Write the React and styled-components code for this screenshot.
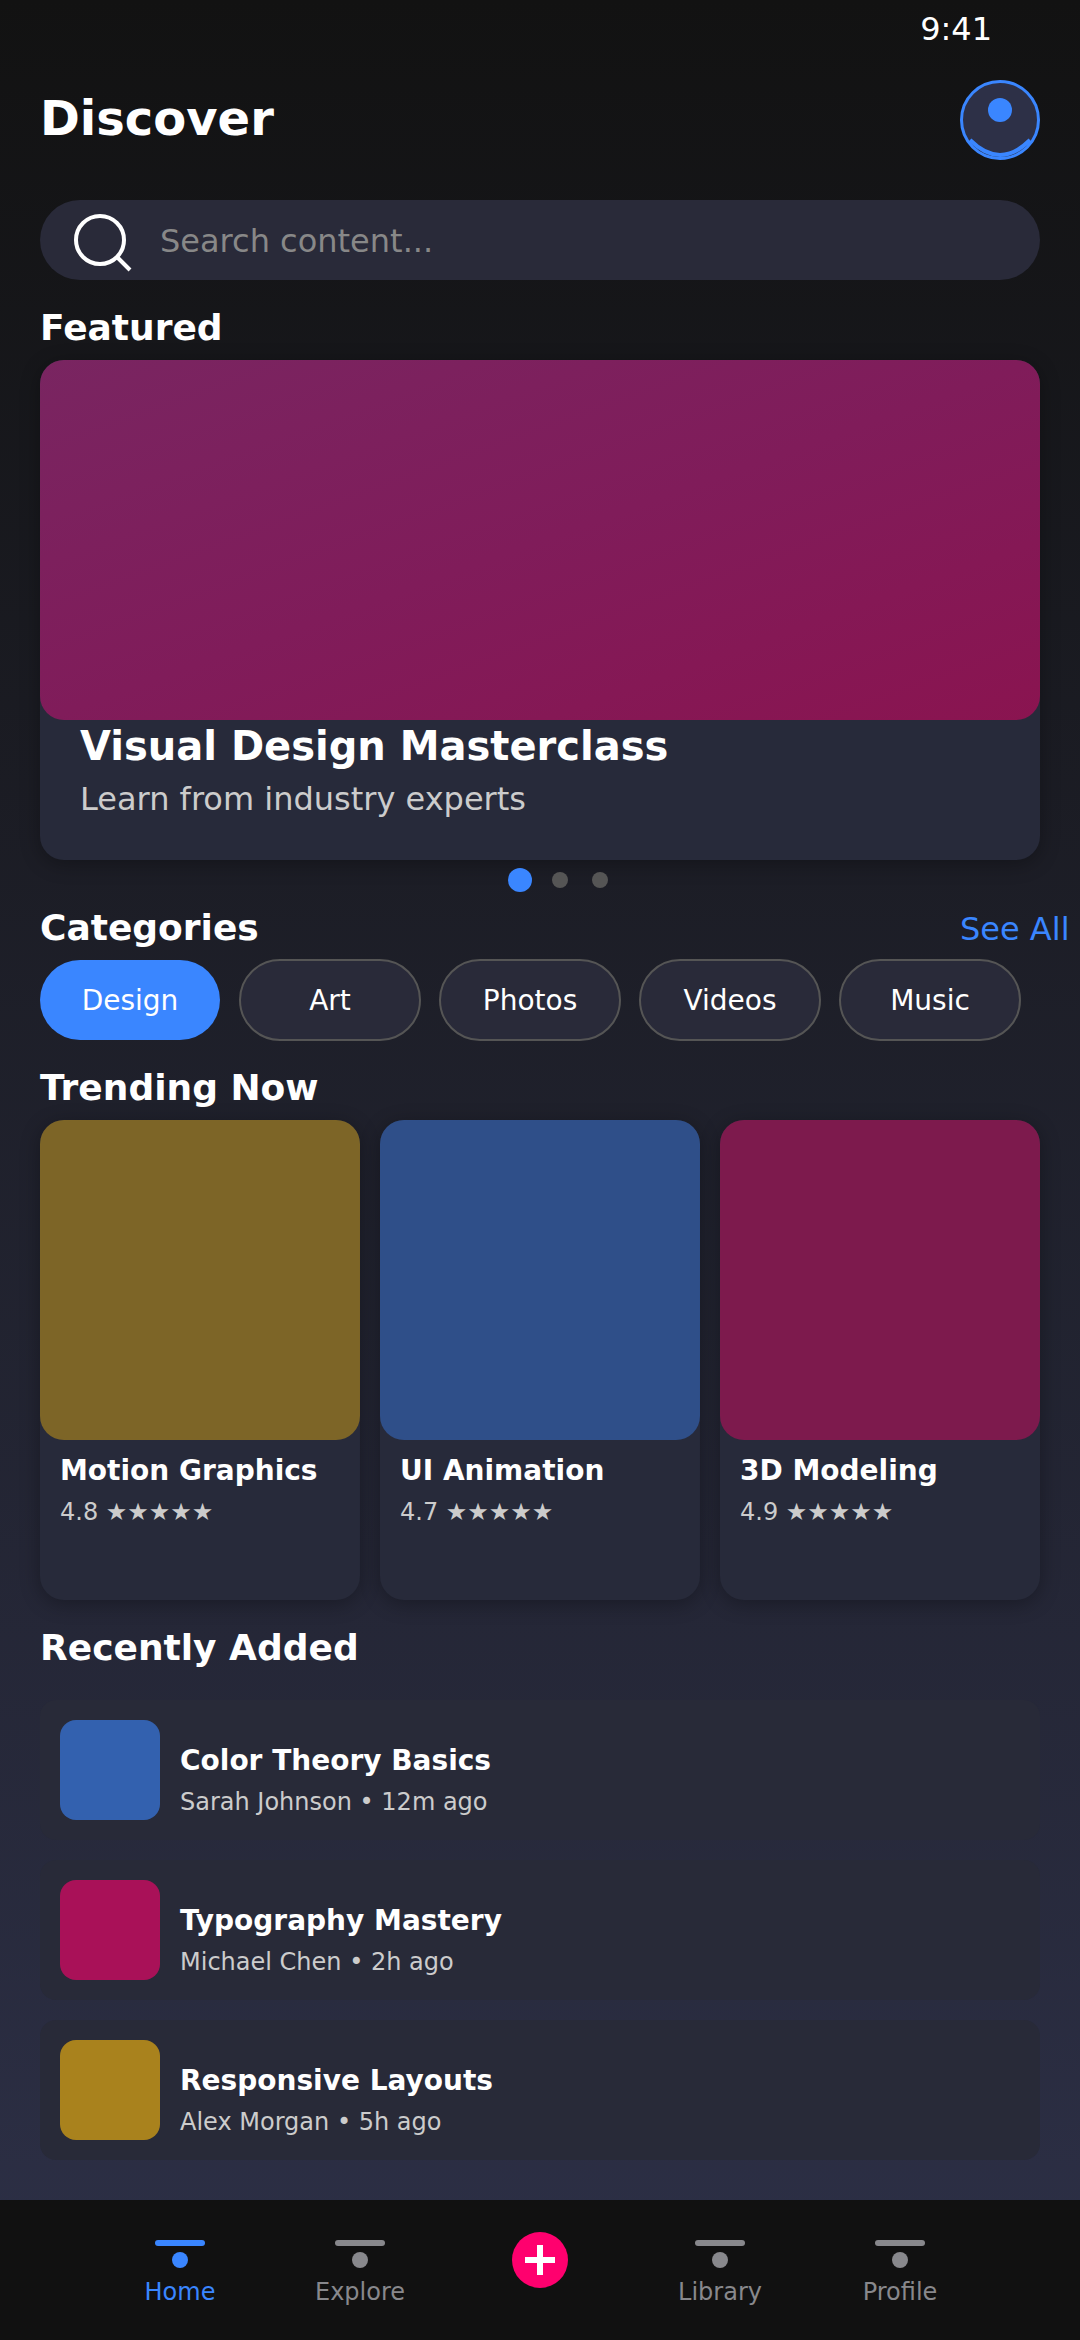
import React, { useState } from "react";
import styled, { createGlobalStyle } from "styled-components";

const color = {
  ink: "#121212",
  surface: "#292a39",
  card: "#272a3a",
  row: "#282a38",
  accent: "#3a86ff",
  pink: "#ff006e",
  text: "#ffffff",
  soft: "#cccccc",
  muted: "#88888c",
  outline: "#555555",
};

const GlobalStyle = createGlobalStyle`
  *, *::before, *::after { box-sizing: border-box; }
  body {
    margin: 0;
    background: ${color.ink};
    color: ${color.text};
    font-family: "DejaVu Sans", sans-serif;
  }
  button, input { font: inherit; color: inherit; border: 0; padding: 0; }
  h1, h2, h3, p, ul { margin: 0; padding: 0; }
  ul { list-style: none; }
`;

const Page = styled.div`
  min-height: 100vh;
  display: flex;
  flex-direction: column;
  background: linear-gradient(to bottom, #121212, #2d3047);
`;

const StatusBar = styled.div`
  height: 60px;
  padding-right: 88px;
  text-align: right;
  font-size: 32px;
  line-height: 58px;
`;

const Content = styled.main`
  flex: 1;
  padding: 20px 40px 40px;
`;

const Header = styled.header`
  display: flex;
  justify-content: space-between;
  align-items: flex-start;
  height: 80px;
`;

const PageTitle = styled.h1`
  font-size: 48px;
  line-height: 76px;
`;

const AvatarButton = styled.button`
  width: 80px;
  height: 80px;
  border-radius: 50%;
  background: none;
  svg { display: block; }
`;

const SearchBar = styled.label`
  display: flex;
  align-items: center;
  gap: 28px;
  height: 80px;
  margin-top: 40px;
  padding: 0 32px;
  border-radius: 40px;
  background: ${color.surface};
  svg { flex: none; }
`;

const SearchInput = styled.input`
  flex: 1;
  min-width: 0;
  height: 80px;
  padding-top: 2px;
  background: none;
  outline: none;
  font-size: 32px;
  &::placeholder { color: #888888; opacity: 1; }
`;

const SectionHead = styled.div`
  display: flex;
  justify-content: space-between;
  align-items: baseline;
  height: 60px;
  margin-top: ${(p) => (p.$tight ? "0" : "20px")};
`;

const SectionTitle = styled.h2`
  font-size: 36px;
  line-height: 56px;
`;

const SeeAll = styled.a`
  width: 80px;
  min-width: 0;
  white-space: nowrap;
  font-size: 32px;
  line-height: 32px;
  color: ${color.accent};
  text-decoration: none;
`;

const Card = styled.article`
  border-radius: 24px;
  background: ${color.card};
  box-shadow: 0 4px 20px rgba(0, 0, 0, 0.3);
`;

const FeaturedArt = styled.div`
  height: 360px;
  border-radius: 24px;
  background: linear-gradient(to bottom right, #792561, #801c5a 50%, #8a1450);
`;

const FeaturedBody = styled.div`
  padding: 0 40px 34px;
`;

const FeaturedTitle = styled.h3`
  font-size: 40px;
  line-height: 52px;
`;

const FeaturedText = styled.p`
  font-size: 32px;
  line-height: 54px;
  color: ${color.soft};
`;

const Pager = styled.div`
  display: flex;
  justify-content: center;
  height: 40px;
  padding-left: 40px;
`;

const PagerDot = styled.button`
  display: grid;
  place-items: center;
  width: 40px;
  height: 40px;
  background: none;
  &::before {
    content: "";
    width: ${(p) => (p.$active ? "24px" : "16px")};
    height: ${(p) => (p.$active ? "24px" : "16px")};
    border-radius: 50%;
    background: ${(p) => (p.$active ? color.accent : color.outline)};
  }
`;

const Chips = styled.div`
  display: flex;
  gap: 20px;
`;

const Chip = styled.button`
  flex: 0 1 180px;
  height: 80px;
  border-radius: 40px;
  font-size: 28px;
  background: ${(p) => (p.$active ? color.accent : color.surface)};
  outline: ${(p) => (p.$active ? "none" : `2px solid ${color.outline}`)};
  outline-offset: -1px;
`;

const TrendingGrid = styled.div`
  display: grid;
  grid-template-columns: repeat(3, 1fr);
  gap: 20px;
`;

const TrendingArt = styled.div`
  height: 320px;
  border-radius: 24px;
  background: ${(p) => p.$tint};
`;

const TrendingBody = styled.div`
  padding: 7px 20px 70px;
`;

const ItemTitle = styled.h3`
  font-size: 28px;
  line-height: 47px;
  white-space: nowrap;
`;

const ItemMeta = styled.p`
  font-size: 24px;
  line-height: 36px;
  color: ${color.soft};
`;

const RecentList = styled.ul`
  display: flex;
  flex-direction: column;
  gap: 20px;
  margin-top: 20px;
`;

const RecentRow = styled.li`
  display: flex;
  gap: 20px;
  padding: 20px;
  border-radius: 16px;
  background: ${color.row};
`;

const Thumb = styled.div`
  width: 100px;
  height: 100px;
  border-radius: 16px;
  background: ${(p) => p.$tint};
`;

const RecentText = styled.div`
  padding-top: 17px;
`;

const NavBar = styled.nav`
  display: grid;
  grid-template-columns: repeat(5, 1fr);
  height: 140px;
  padding: 0 90px;
  background: #111111;
`;

const NavItem = styled.button`
  display: flex;
  flex-direction: column;
  align-items: center;
  gap: 6px;
  padding-top: 40px;
  background: none;
  font-size: 24px;
  line-height: 36px;
  color: ${(p) => (p.$active ? color.accent : color.muted)};
`;

const AddButton = styled.button`
  justify-self: center;
  width: 56px;
  height: 56px;
  margin-top: 32px;
  border-radius: 50%;
  background: ${color.pink};
  svg { display: block; }
`;

const AvatarIcon = () => (
  <svg width="80" height="80" viewBox="0 0 80 80" aria-hidden="true">
    <circle cx="40" cy="40" r="38.5" fill="#2d3047" stroke={color.accent} strokeWidth="3" />
    <circle cx="40" cy="30" r="12" fill={color.accent} />
    <path d="M10 60 Q40 90 70 60" fill="none" stroke={color.accent} strokeWidth="4" />
  </svg>
);

const SearchIcon = () => (
  <svg width="60" height="64" viewBox="0 0 60 64" fill="none" stroke="#fff" strokeWidth="4" aria-hidden="true">
    <circle cx="28" cy="32" r="24" />
    <path d="M44 48 L58 62" />
  </svg>
);

const TabIcon = () => (
  <svg width="50" height="28" viewBox="0 0 50 28" fill="currentColor" aria-hidden="true">
    <rect width="50" height="6" rx="3" />
    <circle cx="25" cy="20" r="8" />
  </svg>
);

const PlusIcon = () => (
  <svg width="56" height="56" viewBox="0 0 56 56" stroke="#fff" strokeWidth="6" aria-hidden="true">
    <path d="M28 13V43M13 28H43" />
  </svg>
);

const categories = ["Design", "Art", "Photos", "Videos", "Music"];

const trending = [
  { title: "Motion Graphics", rating: "4.8", tint: "#7d6527" },
  { title: "UI Animation", rating: "4.7", tint: "#2f4f89" },
  { title: "3D Modeling", rating: "4.9", tint: "#7d1a4d" },
];

const recent = [
  { title: "Color Theory Basics", meta: "Sarah Johnson • 12m ago", tint: "#3361af" },
  { title: "Typography Mastery", meta: "Michael Chen • 2h ago", tint: "#a91158" },
  { title: "Responsive Layouts", meta: "Alex Morgan • 5h ago", tint: "#a9821d" },
];

export default function App() {
  const [category, setCategory] = useState("Design");
  const [slide, setSlide] = useState(0);
  const [tab, setTab] = useState("Home");

  const navItem = (name) => (
    <NavItem type="button" $active={tab === name} onClick={() => setTab(name)}>
      <TabIcon />
      {name}
    </NavItem>
  );

  return (
    <Page>
      <GlobalStyle />
      <StatusBar>9:41</StatusBar>
      <Content>
        <Header>
          <PageTitle>Discover</PageTitle>
          <AvatarButton type="button" aria-label="Account">
            <AvatarIcon />
          </AvatarButton>
        </Header>

        <SearchBar>
          <SearchIcon />
          <SearchInput type="search" placeholder="Search content..." aria-label="Search content" />
        </SearchBar>

        <section>
          <SectionHead>
            <SectionTitle>Featured</SectionTitle>
          </SectionHead>
          <Card>
            <FeaturedArt />
            <FeaturedBody>
              <FeaturedTitle>Visual Design Masterclass</FeaturedTitle>
              <FeaturedText>Learn from industry experts</FeaturedText>
            </FeaturedBody>
          </Card>
          <Pager>
            {[0, 1, 2].map((i) => (
              <PagerDot
                key={i}
                type="button"
                aria-label={`Slide ${i + 1}`}
                $active={slide === i}
                onClick={() => setSlide(i)}
              />
            ))}
          </Pager>
        </section>

        <section>
          <SectionHead $tight>
            <SectionTitle>Categories</SectionTitle>
            <SeeAll href="#categories">See All</SeeAll>
          </SectionHead>
          <Chips>
            {categories.map((name) => (
              <Chip key={name} type="button" $active={category === name} onClick={() => setCategory(name)}>
                {name}
              </Chip>
            ))}
          </Chips>
        </section>

        <section>
          <SectionHead>
            <SectionTitle>Trending Now</SectionTitle>
          </SectionHead>
          <TrendingGrid>
            {trending.map((item) => (
              <Card key={item.title}>
                <TrendingArt $tint={item.tint} />
                <TrendingBody>
                  <ItemTitle>{item.title}</ItemTitle>
                  <ItemMeta>{item.rating} ★★★★★</ItemMeta>
                </TrendingBody>
              </Card>
            ))}
          </TrendingGrid>
        </section>

        <section>
          <SectionHead>
            <SectionTitle>Recently Added</SectionTitle>
          </SectionHead>
          <RecentList>
            {recent.map((item) => (
              <RecentRow key={item.title}>
                <Thumb $tint={item.tint} />
                <RecentText>
                  <ItemTitle>{item.title}</ItemTitle>
                  <ItemMeta>{item.meta}</ItemMeta>
                </RecentText>
              </RecentRow>
            ))}
          </RecentList>
        </section>
      </Content>

      <NavBar>
        {navItem("Home")}
        {navItem("Explore")}
        <AddButton type="button" aria-label="Add">
          <PlusIcon />
        </AddButton>
        {navItem("Library")}
        {navItem("Profile")}
      </NavBar>
    </Page>
  );
}
